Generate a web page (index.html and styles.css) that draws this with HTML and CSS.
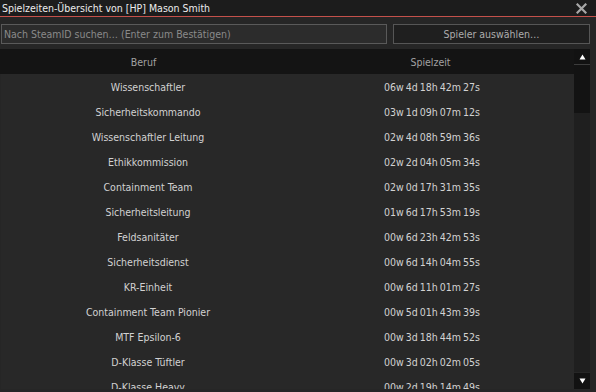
FILE: index.html
```html
<!DOCTYPE html>
<html>
<head>
<meta charset="utf-8">
<link rel="stylesheet" href="styles.css">
</head>
<body>
<div class="window">
  <div class="titlebar">
    <span class="title">Spielzeiten-Übersicht von [HP] Mason Smith</span>
    <svg class="close" width="11" height="11" viewBox="0 0 11 11"><path d="M1.5 1.5 L9.5 9.5 M9.5 1.5 L1.5 9.5" stroke="#a8a8a8" stroke-width="2.2" stroke-linecap="square"/></svg>
  </div>
  <div class="toolbar">
    <div class="search">Nach SteamID suchen… (Enter zum Bestätigen)</div>
    <div class="btn">Spieler auswählen…</div>
  </div>
  <div class="list">
    <div class="table">
      <div class="head"><span>Beruf</span><span>Spielzeit</span></div>
      <div class="rows">
        <div class="row"><span>Wissenschaftler</span><span>06w 4d 18h 42m 27s</span></div>
        <div class="row"><span>Sicherheitskommando</span><span>03w 1d 09h 07m 12s</span></div>
        <div class="row"><span>Wissenschaftler Leitung</span><span>02w 4d 08h 59m 36s</span></div>
        <div class="row"><span>Ethikkommission</span><span>02w 2d 04h 05m 34s</span></div>
        <div class="row"><span>Containment Team</span><span>02w 0d 17h 31m 35s</span></div>
        <div class="row"><span>Sicherheitsleitung</span><span>01w 6d 17h 53m 19s</span></div>
        <div class="row"><span>Feldsanitäter</span><span>00w 6d 23h 42m 53s</span></div>
        <div class="row"><span>Sicherheitsdienst</span><span>00w 6d 14h 04m 55s</span></div>
        <div class="row"><span>KR-Einheit</span><span>00w 6d 11h 01m 27s</span></div>
        <div class="row"><span>Containment Team Pionier</span><span>00w 5d 01h 43m 39s</span></div>
        <div class="row"><span>MTF Epsilon-6</span><span>00w 3d 18h 44m 52s</span></div>
        <div class="row"><span>D-Klasse Tüftler</span><span>00w 3d 02h 02m 05s</span></div>
        <div class="row"><span>D-Klasse Heavy</span><span>00w 2d 19h 14m 49s</span></div>
      </div>
    </div>
    <div class="scrollbar">
      <div class="sbtn up"><svg width="7" height="6" viewBox="0 0 7 6"><path d="M3.5 0.5 L6.5 5.5 L0.5 5.5 Z" fill="#ffffff"/></svg></div>
      <div class="track"><div class="thumb"></div></div>
      <div class="sbtn down"><svg width="7" height="6" viewBox="0 0 7 6"><path d="M0.5 0.5 L6.5 0.5 L3.5 5.5 Z" fill="#ffffff"/></svg></div>
    </div>
  </div>
</div>
</body>
</html>
```
FILE: styles.css
```css
html, body {
  margin: 0;
  padding: 0;
  background: #252525;
}
.window {
  width: 596px;
  height: 392px;
  overflow: hidden;
  background: #262626;
  font-family: "DejaVu Sans Condensed", "DejaVu Sans", sans-serif;
  font-size: 10.5px;
  display: flex;
  flex-direction: column;
}
.titlebar {
  height: 16px;
  background: #1c1c1c;
  border-bottom: 1px solid #c4514b;
  display: flex;
  align-items: center;
  justify-content: space-between;
  padding: 0 9px 0 2px;
  flex: none;
}
.title {
  color: #ececec;
  font-size: 10.5px;
}
.close {
  display: block;
}
.toolbar {
  display: flex;
  gap: 6px;
  padding: 7px 6px 0 1px;
  height: 20px;
  flex: none;
}
.search {
  width: 382px;
  height: 18px;
  border: 1px solid #5a5a5a;
  background: #2c2c2c;
  color: #8a8a8a;
  line-height: 18px;
  padding-left: 2px;
  box-sizing: content-box;
  white-space: nowrap;
}
.btn {
  flex: 1;
  height: 18px;
  border: 1px solid #565656;
  background: #1f1f1f;
  color: #adadad;
  line-height: 18px;
  text-align: center;
}
.list {
  margin-top: 5px;
  display: flex;
  height: 340px;
  flex: none;
}
.table {
  width: 574px;
  display: flex;
  flex-direction: column;
  overflow: hidden;
}
.head {
  height: 25px;
  background: #141414;
  display: flex;
  color: #a2a2a2;
  flex: none;
  overflow: hidden;
}
.head span, .row span {
  flex: 1;
  text-align: center;
  line-height: 26px;
}
.rows {
  background: #282828;
  margin-left: 1px;
  flex: 1;
  overflow: hidden;
}
.row {
  height: 25px;
  display: flex;
  color: #d2d2d2;
  padding-left: 5px;
  overflow: hidden;
}
.row span:last-child {
  word-spacing: -1px;
}
.scrollbar {
  width: 16px;
  display: flex;
  flex-direction: column;
}
.sbtn {
  height: 15px;
  background: #121212;
  display: flex;
  align-items: center;
  justify-content: center;
  flex: none;
}
.sbtn svg { display: block; }
.up {
  border-bottom: 1px solid #3c3c3c;
}
.down {
  height: 16px;
  margin-top: 1px;
}
.track {
  flex: 1;
  background: #1f1f1f;
}
.thumb {
  height: 48px;
  background: #131313;
}
```
